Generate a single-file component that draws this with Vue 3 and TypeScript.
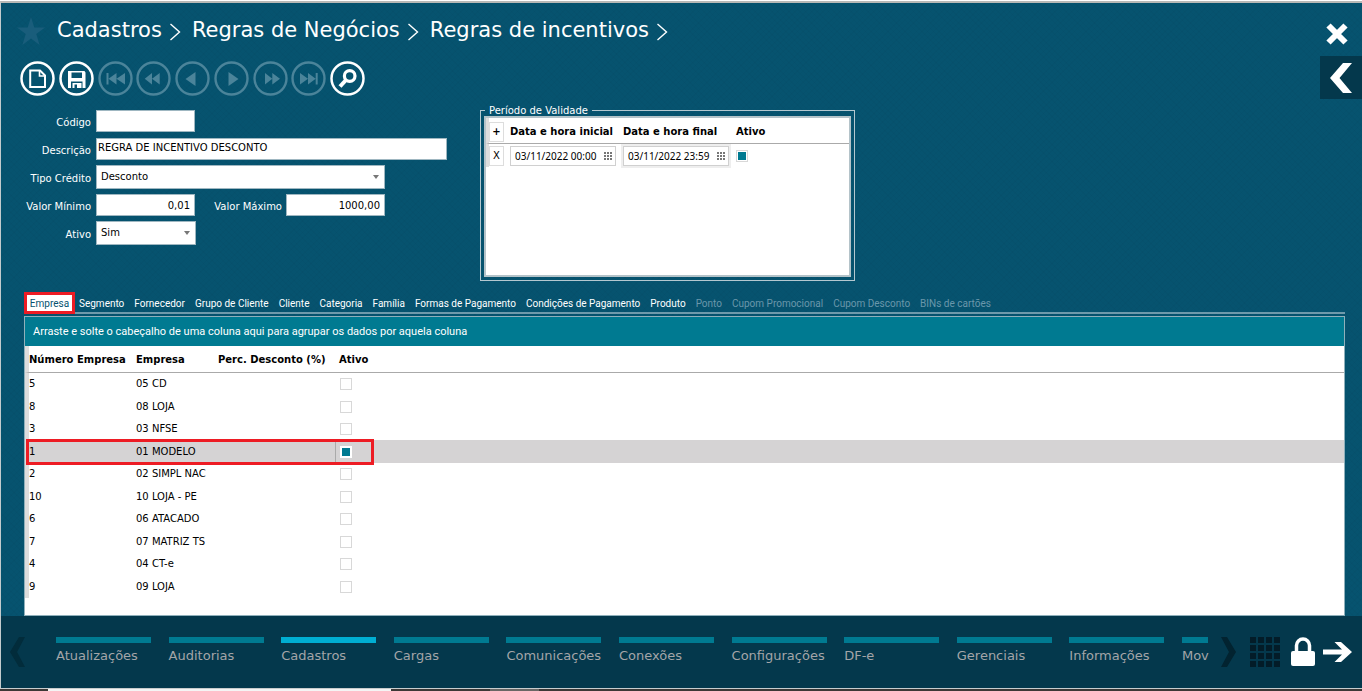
<script setup lang="ts">
import { ref } from 'vue'

interface Tab { label: string; disabled?: boolean }
interface Company { id: number; name: string; active: boolean }

const crumbs = ['Cadastros', 'Regras de Negócios', 'Regras de incentivos']

const tabs: Tab[] = [
  { label: 'Empresa' },
  { label: 'Segmento' },
  { label: 'Fornecedor' },
  { label: 'Grupo de Cliente' },
  { label: 'Cliente' },
  { label: 'Categoria' },
  { label: 'Família' },
  { label: 'Formas de Pagamento' },
  { label: 'Condições de Pagamento' },
  { label: 'Produto' },
  { label: 'Ponto', disabled: true },
  { label: 'Cupom Promocional', disabled: true },
  { label: 'Cupom Desconto', disabled: true },
  { label: 'BINs de cartões', disabled: true },
]
const activeTab = ref('Empresa')

const companies = ref<Company[]>([
  { id: 5, name: '05 CD', active: false },
  { id: 8, name: '08 LOJA', active: false },
  { id: 3, name: '03 NFSE', active: false },
  { id: 1, name: '01 MODELO', active: true },
  { id: 2, name: '02 SIMPL NAC', active: false },
  { id: 10, name: '10 LOJA - PE', active: false },
  { id: 6, name: '06 ATACADO', active: false },
  { id: 7, name: '07 MATRIZ TS', active: false },
  { id: 4, name: '04 CT-e', active: false },
  { id: 9, name: '09 LOJA', active: false },
])
const selectedId = ref(1)

const modules = ['Atualizações', 'Auditorias', 'Cadastros', 'Cargas', 'Comunicações', 'Conexões', 'Configurações', 'DF-e', 'Gerenciais', 'Informações', 'Mov']
const activeModule = ref('Cadastros')

const code = ref('')
const description = ref('REGRA DE INCENTIVO DESCONTO')
const minValue = ref('0,01')
const maxValue = ref('1000,00')
const startDate = ref('03/11/2022 00:00')
const endDate = ref('03/11/2022 23:59')
const periodActive = ref(true)

const navIcons = [
  { name: 'Primeiro', d: 'M8.500 12h2v11.500h-2zM10.500 17.700l8-5.700v11.500zM18.500 17.700l8.500-5.700v11.500z' },
  { name: 'Retroceder', d: 'M8.700 17.700l7.300-5.700v11.500zM16 17.700l7.700-5.700v11.500z' },
  { name: 'Anterior', d: 'M10.500 18l10-7v14z' },
  { name: 'Próximo', d: 'M24.500 18l-10-7v14z' },
  { name: 'Avançar', d: 'M27 17.700l-7.700-5.700v11.500zM19.300 17.700l-7.300-5.700v11.500z' },
  { name: 'Último', d: 'M24.700 12h2v11.500h-2zM24.700 17.700l-7.700-5.700v11.500zM17 17.700l-8-5.700v11.500z' },
]
const gridDots = [0, 1, 2, 3]
</script>

<template>
  <div class="screen">
    <main class="workspace">
      <header class="top">
        <div class="crumbs-row">
          <button class="star" aria-label="Favorito">
            <svg width="28" height="28" viewBox="0 0 28 28"><path d="M14 0l3.300 10.500H28l-8.700 6.500 3.300 11L14 21.500 5.400 28l3.300-11L0 10.500h10.700z" fill="#195d7b" /></svg>
          </button>
          <nav class="crumbs">
            <span v-for="c in crumbs" :key="c" class="crumb">
              <a href="#">{{ c }}</a>
              <svg width="12" height="18" viewBox="0 0 12 18"><path d="M1.500 1l9 8-9 8" fill="none" stroke="#fff" stroke-width="1.400" /></svg>
            </span>
          </nav>
        </div>
        <div class="tools">
          <button class="tool" aria-label="Novo">
            <svg width="35" height="35" viewBox="0 0 35 35"><g fill="none" stroke="#fff"><circle cx="17.500" cy="17.500" r="16" stroke-width="2.500" /><path d="M10.200 9.500h9.800l5 5V26H10.200z" stroke-width="2" /><path d="M19.500 9.500V15H25" stroke-width="1.600" /></g></svg>
          </button>
          <button class="tool" aria-label="Salvar">
            <svg width="35" height="35" viewBox="0 0 35 35"><circle cx="17.500" cy="17.500" r="16" fill="none" stroke="#fff" stroke-width="2.500" /><path fill="#fff" fill-rule="evenodd" d="M9 10h16.500l1 1.500v15.500H23.500V20.500H12V27H9zM12.500 11.500v5.500h10.500v-5.500zM13.500 22h9v5h-9zM15.500 23.500V27h2.500v-3.500z" /></svg>
          </button>
          <button v-for="i in navIcons" :key="i.name" class="tool" :aria-label="i.name" disabled>
            <svg width="35" height="35" viewBox="0 0 35 35"><circle cx="17.500" cy="17.500" r="16" fill="none" stroke="#4b849a" stroke-width="2.400" /><path :d="i.d" fill="#4b849a" /></svg>
          </button>
          <button class="tool" aria-label="Pesquisar">
            <svg width="35" height="35" viewBox="0 0 35 35"><g fill="none" stroke="#fff"><circle cx="17.500" cy="17.500" r="16" stroke-width="2.500" /><circle cx="19.700" cy="15" r="5.300" stroke-width="3.200" /><path d="M16 19l-6 6.500" stroke-width="4" /></g></svg>
          </button>
        </div>
        <div class="side">
          <button class="close" aria-label="Fechar">
            <svg width="24" height="24" viewBox="0 0 24 24"><path d="M3.500 3.500l17 17M20.500 3.500l-17 17" stroke="#fff" stroke-width="6" /></svg>
          </button>
          <button class="drawer" aria-label="Abrir painel">
            <svg width="24" height="32" viewBox="0 0 24 32"><path d="M14 1h9L10.500 16 23 31h-9L1 16z" fill="#fff" /></svg>
          </button>
        </div>
      </header>

      <section class="details">
        <form class="form" @submit.prevent>
          <label for="codigo">Código</label>
          <div><input id="codigo" v-model="code" class="short" type="text" /></div>
          <label for="descricao">Descrição</label>
          <div><input id="descricao" v-model="description" class="long" type="text" /></div>
          <label for="tipo">Tipo Crédito</label>
          <div class="pick wide">
            <select id="tipo"><option>Desconto</option></select>
            <svg width="6" height="4" viewBox="0 0 6 4"><path d="M0 0h6L3 4z" fill="#777" /></svg>
          </div>
          <label for="minimo">Valor Mínimo</label>
          <div class="pair">
            <input id="minimo" v-model="minValue" class="short num" type="text" />
            <label for="maximo">Valor Máximo</label>
            <input id="maximo" v-model="maxValue" class="short num" type="text" />
          </div>
          <label for="ativo">Ativo</label>
          <div class="pick narrow">
            <select id="ativo"><option>Sim</option></select>
            <svg width="6" height="4" viewBox="0 0 6 4"><path d="M0 0h6L3 4z" fill="#777" /></svg>
          </div>
        </form>

        <fieldset class="period">
          <legend>Período de Validade</legend>
          <div class="period-box">
            <table>
              <thead>
                <tr>
                  <th class="act"><button type="button">+</button></th>
                  <th class="date">Data e hora inicial</th>
                  <th class="date">Data e hora final</th>
                  <th>Ativo</th>
                </tr>
              </thead>
              <tbody>
                <tr>
                  <td class="act"><button type="button">X</button></td>
                  <td class="date">
                    <div class="stamp">
                      <input v-model="startDate" type="text" aria-label="Data e hora inicial" />
                      <svg width="8" height="8" viewBox="0 0 8 8"><path d="M0 1h8M0 4h8M0 7h8" stroke="#777" stroke-width="2" stroke-dasharray="2 1" /></svg>
                    </div>
                  </td>
                  <td class="date focus">
                    <div class="stamp">
                      <input v-model="endDate" type="text" aria-label="Data e hora final" />
                      <svg width="8" height="8" viewBox="0 0 8 8"><path d="M0 1h8M0 4h8M0 7h8" stroke="#777" stroke-width="2" stroke-dasharray="2 1" /></svg>
                    </div>
                  </td>
                  <td><input v-model="periodActive" class="tick" type="checkbox" aria-label="Ativo" /></td>
                </tr>
              </tbody>
            </table>
          </div>
        </fieldset>
      </section>

      <section class="panel">
        <div class="tabs" role="tablist">
          <button
            v-for="t in tabs"
            :key="t.label"
            role="tab"
            :class="['tab', { active: t.label === activeTab }]"
            :aria-selected="t.label === activeTab"
            :disabled="t.disabled"
            @click="activeTab = t.label"
          >{{ t.label }}</button>
        </div>
        <div class="grid-box">
          <div class="group-bar">Arraste e solte o cabeçalho de uma coluna aqui para agrupar os dados por aquela coluna</div>
          <table class="companies">
            <thead>
              <tr>
                <th class="c-id">Número Empresa</th>
                <th class="c-name">Empresa</th>
                <th class="c-perc">Perc. Desconto (%)</th>
                <th class="c-active">Ativo</th>
              </tr>
            </thead>
            <tbody>
              <tr v-for="c in companies" :key="c.id" :class="{ selected: c.id === selectedId }" @click="selectedId = c.id">
                <td class="c-id">{{ c.id }}</td>
                <td class="c-name">{{ c.name }}</td>
                <td class="c-perc"></td>
                <td class="c-active"><input v-model="c.active" class="tick" type="checkbox" :aria-label="'Ativo ' + c.name" /></td>
              </tr>
            </tbody>
          </table>
        </div>
      </section>
    </main>

    <footer class="dock">
      <button class="arrow" aria-label="Módulos anteriores">
        <svg width="16" height="30" viewBox="0 0 16 30"><path d="M9 0h6L7 15l8 15H9L0 15z" fill="#022c3b" /></svg>
      </button>
      <nav class="modules">
        <a v-for="m in modules" :key="m" href="#" :class="{ current: m === activeModule }" @click.prevent="activeModule = m">{{ m }}</a>
      </nav>
      <button class="arrow next" aria-label="Próximos módulos">
        <svg width="16" height="30" viewBox="0 0 16 30"><path d="M7 0H1l8 15-8 15h6l9-15z" fill="#022330" /></svg>
      </button>
      <button class="apps" aria-label="Aplicativos">
        <svg width="30" height="30" viewBox="0 0 30 30" fill="#031c28">
          <template v-for="r in gridDots" :key="r">
            <rect v-for="k in gridDots" :key="k" :x="k * 8" :y="r * 8" width="6" height="6" />
          </template>
        </svg>
      </button>
      <button class="lock" aria-label="Bloquear">
        <svg width="24" height="30" viewBox="0 0 24 30"><path d="M5.500 15V8.500a6.500 6.500 0 0113 0V15" fill="none" stroke="#fff" stroke-width="3.500" /><rect y="14" width="24" height="15" rx="2" fill="#fff" /></svg>
      </button>
      <button class="exit" aria-label="Sair">
        <svg width="29" height="22" viewBox="0 0 29 22"><path d="M0 8.500h19L11.500 1H18l11 10-11 10h-6.500l7.500-7.500H0z" fill="#fff" /></svg>
      </button>
    </footer>
    <div class="taskbar"><span class="task"></span><span class="chip"></span></div>
  </div>
</template>

<style>
body {
  margin: 0;
  background: #fff;
}
</style>

<style scoped>
* {
  box-sizing: border-box;
}
.screen {
  display: flex;
  flex-direction: column;
  min-height: 100vh;
  font: 10px/14px Verdana, "DejaVu Sans", sans-serif;
  color: #000;
}
button {
  padding: 0;
  border: 0;
  background: none;
  font: inherit;
  color: inherit;
}
button svg {
  display: block;
}
input,
select {
  margin: 0;
  font: inherit;
  color: inherit;
  border-radius: 0;
}
.workspace {
  flex: 1;
  display: flex;
  flex-direction: column;
  margin-top: 1px;
  border-top: 2px solid #b9b9b6;
  border-left: 1px solid #c3cbcd;
  background:
    repeating-linear-gradient(45deg, rgba(0, 0, 0, 0.02) 0 1px, transparent 1px 4px),
    repeating-linear-gradient(-45deg, rgba(0, 0, 0, 0.02) 0 1px, transparent 1px 4px),
    #06536f;
}
.top {
  display: grid;
  grid-template-columns: 1fr auto;
  grid-template-rows: 54px 1fr;
  padding-left: 16px;
}
.crumbs-row {
  display: flex;
  align-items: center;
  gap: 12px;
}
.star {
  padding-top: 2px;
}
.crumbs {
  display: flex;
  gap: 11px;
  font-size: 21px;
  line-height: 28px;
}
.crumb {
  display: flex;
  align-items: center;
  gap: 7px;
}
.crumb a {
  color: #fff;
  text-decoration: none;
}
.crumb svg {
  margin-top: 4px;
}
.tools {
  display: flex;
  justify-content: space-between;
  align-items: flex-start;
  width: 348px;
  padding: 4px 0 0 3px;
}
.side {
  grid-column: 2;
  grid-row: 1 / span 2;
  display: flex;
  flex-direction: column;
  align-items: flex-end;
  padding-top: 19px;
}
.close {
  margin-right: 13px;
}
.drawer {
  display: flex;
  align-items: center;
  justify-content: center;
  width: 42px;
  height: 43px;
  margin-top: 10px;
  background: #04384c;
}
.details {
  display: flex;
  gap: 33px;
  align-items: flex-start;
  padding-top: 6px;
}
.form {
  display: grid;
  grid-template-columns: 90px 351px;
  grid-auto-rows: 22px;
  gap: 6px 5px;
  padding-top: 5px;
  align-items: center;
}
.form label {
  color: #fff;
  text-align: right;
  padding-top: 4px;
}
.form input {
  display: block;
  height: 22px;
  border: 1px solid #9fb7c1;
  background: #fff;
  padding: 0 2px;
}
.form .short {
  width: 99px;
}
.form .long {
  width: 100%;
  padding: 0 1px 4px;
}
.form .num {
  text-align: right;
  padding: 0 4px;
}
.pair {
  display: flex;
  align-items: center;
}
.pair label {
  width: 87px;
  margin-right: 4px;
}
.pick {
  position: relative;
}
.pick select {
  display: block;
  appearance: none;
  width: 100%;
  height: 24px;
  padding: 0 4px;
  border: 1px solid #9fb7c1;
  background: #fff;
}
.pick svg {
  position: absolute;
  right: 6px;
  top: 10px;
}
.wide {
  width: 289px;
}
.narrow {
  width: 100px;
}
.period {
  width: 375px;
  height: 176px;
  margin: 0;
  padding: 0 3px 3px;
  border: 1px solid #b4c8d0;
}
.period legend {
  margin-left: 1px;
  padding: 0 4px;
  line-height: 11px;
  color: #fff;
}
.period-box {
  height: 161px;
  border: 2px solid #b4c3c9;
  background: #fff;
}
table {
  border-collapse: separate;
  border-spacing: 0;
  width: 100%;
}
th,
td {
  padding: 0;
  text-align: left;
  white-space: nowrap;
}
.period th {
  height: 26px;
  padding-top: 3px;
  border-bottom: 1px solid #aaa;
}
.period td {
  height: 23px;
}
.period .act {
  width: 24px;
  border-left: 3px solid #ddd;
}
.act button {
  display: block;
  width: 15px;
  height: 20px;
  border: 1px solid #ddd;
  background: #fff;
  font-size: 10px;
}
.period .date {
  width: 113px;
}
.stamp {
  display: flex;
  align-items: center;
  width: 106px;
  height: 20px;
  border: 1px solid #d0d0d0;
}
.focus .stamp {
  box-shadow: 0 0 0 2px #eee;
}
.stamp input {
  width: 93px;
  padding: 0 0 0 4px;
  border: 0;
  background: none;
  font: 10px/16px "Segoe UI", "Noto Sans", sans-serif;
}
.tick {
  appearance: none;
  display: block;
  width: 12px;
  height: 12px;
  border: 1px solid #d8d8d8;
  background: #fff;
}
.tick:checked {
  border: 2px solid #fff;
  background: #007a91;
}
.period .tick:checked {
  outline: 1px solid #d8d8d8;
  outline-offset: -1px;
}
.panel {
  flex: 1;
  display: flex;
  flex-direction: column;
  margin: 11px 17px 0 23px;
}
.tabs {
  display: flex;
  gap: 10px;
  height: 22px;
  border-bottom: 2px solid #6f9aab;
  font: 10px/14px "Segoe UI", Roboto, sans-serif;
  color: #fff;
}
.tab {
  padding-top: 3px;
  white-space: nowrap;
}
.tab:disabled {
  color: #6a97ab;
}
.tab.active {
  width: 51px;
  height: 22px;
  margin-right: -6px;
  padding-top: 1px;
  border: 3px solid #ed1c24;
  background: #fff;
  color: #06526f;
}
.grid-box {
  flex: 1;
  margin-top: 2px;
  border: 1px solid #8fb0bb;
  background: #fff;
}
.group-bar {
  height: 29px;
  padding-left: 8px;
  background: #007a91;
  color: #fff;
  font: 11px/30px "Segoe UI", Roboto, sans-serif;
}
.companies th {
  height: 27px;
  padding-top: 2px;
  border-bottom: 1px solid #aaa;
}
.companies td {
  height: 22px;
}
.companies tr:nth-child(even) td {
  height: 23px;
}
.companies .c-id {
  position: relative;
  width: 111px;
  border-left: 4px solid #ddd;
}
.c-name {
  width: 82px;
}
.c-perc {
  width: 117px;
}
.companies .c-active {
  padding-left: 4px;
}
.companies td.c-active {
  padding-left: 5px;
}
.selected td {
  background: #d5d3d4;
}
.selected td.c-active {
  border-left: 1px solid #aaa;
  padding-left: 4px;
}
.selected .c-id::after {
  content: "";
  box-sizing: border-box;
  position: absolute;
  left: -3px;
  top: -1px;
  z-index: 1;
  width: 348px;
  height: 26px;
  border: 3px solid #ed1c24;
}
.dock {
  display: flex;
  align-items: flex-start;
  height: 72px;
  padding: 21px 10px 0 9px;
  border-left: 1px solid #c3cbcd;
  background: #04384c;
}
.modules {
  flex: 1;
  display: flex;
  justify-content: space-between;
  min-width: 0;
  margin-left: 30px;
  font-size: 13px;
  line-height: 18px;
}
.modules a {
  width: 95px;
  padding-top: 4px;
  border-top: 6px solid #007a91;
  color: #a3a5a8;
  text-decoration: none;
  white-space: nowrap;
}
.modules a:last-child {
  width: 26px;
}
.modules a.current {
  border-top-color: #00aed2;
}
.next {
  margin-left: 12px;
}
.apps {
  margin-left: 14px;
}
.lock {
  margin-left: 11px;
}
.exit {
  margin: 4px 0 0 8px;
}
.taskbar {
  display: flex;
  height: 3px;
  border-top: 1px solid #c8cccd;
  background: #3c3836;
}
.task {
  width: 343px;
  margin-left: 48px;
  background: #f4f4f4;
}
.chip {
  width: 49px;
  margin-left: 99px;
  background: #6a6765;
}
</style>
